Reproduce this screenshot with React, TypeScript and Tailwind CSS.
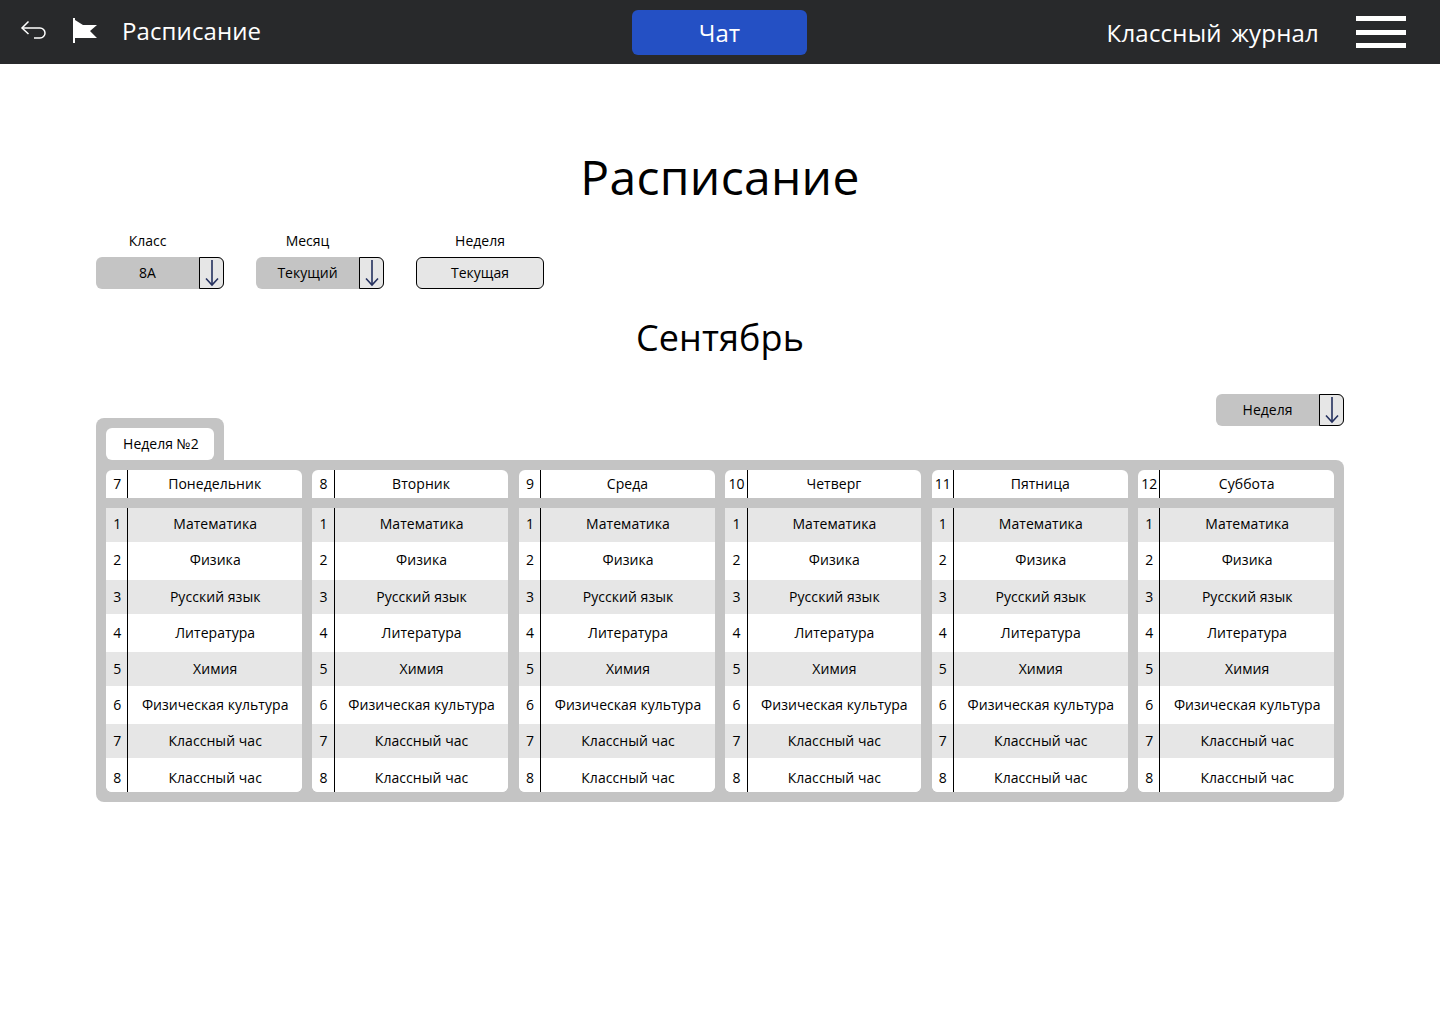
import React from 'react';

const days = [
  { num: 7, name: 'Понедельник' },
  { num: 8, name: 'Вторник' },
  { num: 9, name: 'Среда' },
  { num: 10, name: 'Четверг' },
  { num: 11, name: 'Пятница' },
  { num: 12, name: 'Суббота' },
];

// row 8 is shorter than the other white rows, text sits a bit low in it
const lessons = [
  { name: 'Математика', row: 'h-[34px] bg-[#e6e6e6]', pad: 'pb-[2px]' },
  { name: 'Физика', row: 'h-[38px] bg-white', pad: 'pb-[2px]' },
  { name: 'Русский язык', row: 'h-[34px] bg-[#e6e6e6]', pad: '' },
  { name: 'Литература', row: 'h-[38px] bg-white', pad: '' },
  { name: 'Химия', row: 'h-[34px] bg-[#e6e6e6]', pad: '' },
  { name: 'Физическая культура', row: 'h-[38px] bg-white', pad: '' },
  { name: 'Классный час', row: 'h-[34px] bg-[#e6e6e6]', pad: '' },
  { name: 'Классный час', row: 'h-[34px] bg-white', pad: 'pt-[6px]' },
];

const DownArrow = () => (
  <svg width="14" height="28" viewBox="0 0 14 28" fill="none" stroke="#24305e" strokeWidth="1.6">
    <path d="M7 1v25" />
    <path d="M1 19.5 7 26l6-6.5" />
  </svg>
);

const Select = ({ value }: { value: string }) => (
  <div className="flex h-8 w-32 rounded-md bg-[#c4c4c4]">
    <div className="flex flex-1 items-center justify-center text-sm text-black">{value}</div>
    <div className="flex w-[25px] items-center justify-center rounded-r-md border border-black bg-[#e6e6e6]">
      <DownArrow />
    </div>
  </div>
);

const DayColumn = ({ num, name }: { num: number; name: string }) => (
  <div>
    <div className="flex h-7 overflow-hidden rounded-t-md bg-white">
      <div className="flex w-[22.4px] shrink-0 items-center justify-center border-r border-black pl-[1px] text-sm">{num}</div>
      <div className="flex-1 pr-[1px] text-center text-sm leading-7 tracking-[0.05px]">{name}</div>
    </div>
    <div className="mt-[10px] overflow-hidden rounded-b-md bg-white">
      {lessons.map((lesson, i) => (
        <div key={i} className={`flex ${lesson.row}`}>
          <div className={`flex w-[22.4px] shrink-0 items-center justify-center border-r border-black pl-[1px] text-sm ${lesson.pad}`}>{i + 1}</div>
          <div className={`flex flex-1 items-center justify-center text-sm tracking-[0.05px] ${lesson.pad}`}>{lesson.name}</div>
        </div>
      ))}
    </div>
  </div>
);

export default function App() {
  return (
    <div className="min-h-[1024px] bg-white font-['Open_Sans','Noto_Sans',sans-serif] text-black antialiased">
      {/* Top bar */}
      <header className="grid h-16 grid-cols-[632px_175px_1fr] items-center bg-[#28292b] text-2xl text-white">
        <div className="flex items-center">
          <svg width="26" height="22" viewBox="0 0 26 22" fill="none" stroke="#fff" strokeWidth="1.5" className="ml-[20px] mb-[2px]">
            <path d="M8.5 1.5 2 8l6.5 6" />
            <path d="M2 8h18a5 5 0 0 1 0 10h-6" />
          </svg>
          <svg width="25" height="26" viewBox="0 0 25 26" className="ml-[27px] mb-[3px]" fill="#fff">
            <path d="M0 0h2v25H0z" />
            <path d="M2 2l8 5h14l-7 6 7 7H2z" />
          </svg>
          <span className="ml-[24px] -translate-y-px tracking-[0.1px]">Расписание</span>
        </div>
        <button className="mt-[1px] h-[45px] rounded-md bg-[#2450c4]">Чат</button>
        <div className="flex items-center justify-end pr-[34px]">
          <span className="mt-[2px] tracking-[0.2px] [word-spacing:3px]">Классный журнал</span>
          <div className="ml-[37px] flex w-[50px] flex-col gap-[8.5px]">
            <div className="h-[5px] bg-white" />
            <div className="h-[5px] bg-white" />
            <div className="h-[5px] bg-white" />
          </div>
        </div>
      </header>

      <main className="px-24">
        <h1 className="mt-[80px] text-center text-5xl leading-[66px] tracking-[0.3px]">Расписание</h1>

        {/* Filters */}
        <div className="mt-[21px] flex gap-8">
          <div className="w-32">
            <div className="mb-[6px] w-[103px] text-center text-sm leading-5">Класс</div>
            <Select value="8А" />
          </div>
          <div className="w-32">
            <div className="mb-[6px] w-[103px] text-center text-sm leading-5">Месяц</div>
            <Select value="Текущий" />
          </div>
          <div className="w-32">
            <div className="mb-[6px] text-center text-sm leading-5">Неделя</div>
            <div className="flex h-8 items-center justify-center rounded-md border border-black bg-[#e6e6e6] text-sm">Текущая</div>
          </div>
        </div>

        <h2 className="mt-[24px] text-center text-4xl leading-[50px] tracking-[0.1px]">Сентябрь</h2>

        <div className="mt-[31px] flex justify-end">
          <Select value="Неделя" />
        </div>

        {/* Week table */}
        <div className="-mt-2">
          <div className="w-32 rounded-t-lg bg-[#c4c4c4] px-[10px] pt-[10px]">
            <div className="flex h-8 w-[108px] items-center justify-center rounded-md bg-white pl-[2px] text-sm">Неделя №2</div>
          </div>
          <div className="grid grid-cols-6 gap-[10.4px] rounded-b-lg rounded-tr-lg bg-[#c4c4c4] p-[10px]">
            {days.map((d) => (
              <DayColumn key={d.num} num={d.num} name={d.name} />
            ))}
          </div>
        </div>
      </main>
    </div>
  );
}
